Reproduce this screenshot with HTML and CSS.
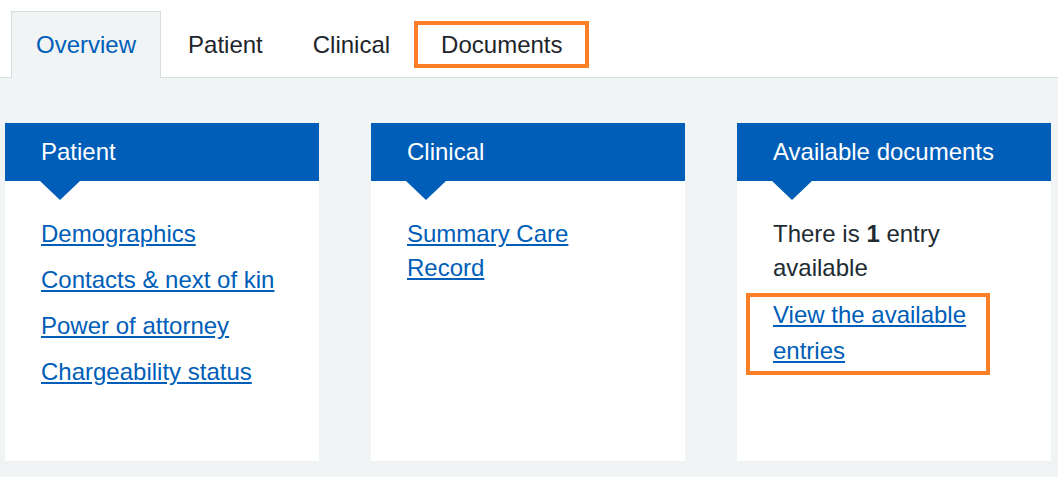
FILE: index.html
```html
<!DOCTYPE html>
<html lang="en">
<head>
<meta charset="utf-8">
<title>Overview</title>
<link rel="stylesheet" href="styles.css">
</head>
<body>
<nav class="tabs">
  <a class="tab tab-active" href="#">Overview</a>
  <a class="tab" href="#">Patient</a>
  <a class="tab" href="#">Clinical</a>
  <a class="tab tab-highlight" href="#">Documents</a>
</nav>
<main class="panel">
  <section class="card">
    <h2 class="card-head">Patient</h2>
    <div class="card-body">
      <ul class="link-list">
        <li><a href="#">Demographics</a></li>
        <li><a href="#">Contacts &amp; next of kin</a></li>
        <li><a href="#">Power of attorney</a></li>
        <li><a href="#">Chargeability status</a></li>
      </ul>
    </div>
  </section>
  <section class="card">
    <h2 class="card-head">Clinical</h2>
    <div class="card-body">
      <ul class="link-list">
        <li><a href="#">Summary Care Record</a></li>
      </ul>
    </div>
  </section>
  <section class="card">
    <h2 class="card-head">Available documents</h2>
    <div class="card-body">
      <p class="card-text">There is <strong>1</strong> entry available</p>
      <div class="highlight-box">
        <a href="#">View the available entries</a>
      </div>
    </div>
  </section>
</main>
</body>
</html>
```
FILE: styles.css
```css
html, body {
  margin: 0;
  padding: 0;
  background: #ffffff;
}

body {
  font-family: "Liberation Sans", Arial, sans-serif;
  font-size: 24px;
  color: #212b32;
  height: 477px;
  overflow: hidden;
  display: flex;
  flex-direction: column;
}

.tabs {
  display: flex;
  padding: 11px 0 0 11px;
  border-bottom: 1px solid #d8dde0;
  height: 66px;
}

.tab {
  position: relative;
  display: block;
  padding: 17px 24px 16px;
  line-height: 32px;
  border: 1px solid transparent;
  border-bottom: 0;
  color: #1d252b;
  text-decoration: none;
}

.tab-active {
  background: #f0f4f5;
  border-color: #d8dde0;
  color: #005eb8;
  margin: 0 2px -1px 0;
  padding-bottom: 17px;
}

.tab-highlight {
  margin-left: 1px;
}

.tab-highlight::after {
  content: "";
  position: absolute;
  left: -3px;
  right: -2px;
  top: 9px;
  height: 47px;
  box-sizing: border-box;
  border: 4px solid #fb7f26;
}

.panel {
  flex: 1;
  background: #f0f4f5;
  padding: 45px 7px 16px 5px;
  display: grid;
  grid-template-columns: 314px 314px 314px;
  column-gap: 52px;
  align-items: stretch;
}

.card {
  background: #ffffff;
  display: flex;
  flex-direction: column;
}

.card-head {
  position: relative;
  margin: 0;
  background: #005eb8;
  color: #ffffff;
  font-size: 24px;
  font-weight: normal;
  line-height: 32px;
  padding: 13px 36px;
}

.card-head::after {
  content: "";
  position: absolute;
  top: 100%;
  left: 35px;
  border-left: 20px solid transparent;
  border-right: 20px solid transparent;
  border-top: 19px solid #005eb8;
}

.card-body {
  padding: 36px 36px 20px;
}

.link-list {
  list-style: none;
  margin: 0;
  padding: 0;
}

.link-list li {
  line-height: 34px;
  margin: 0 0 12px;
}

a {
  color: #005eb8;
}

.card-text {
  margin: 0;
  line-height: 34px;
}

.card-text strong {
  font-weight: bold;
}

.highlight-box {
  margin: 8px 0 0 -27px;
  width: 244px;
  box-sizing: border-box;
  border: 4px solid #fb7f26;
  padding: 0 0 2px 23px;
  line-height: 36px;
}
```
